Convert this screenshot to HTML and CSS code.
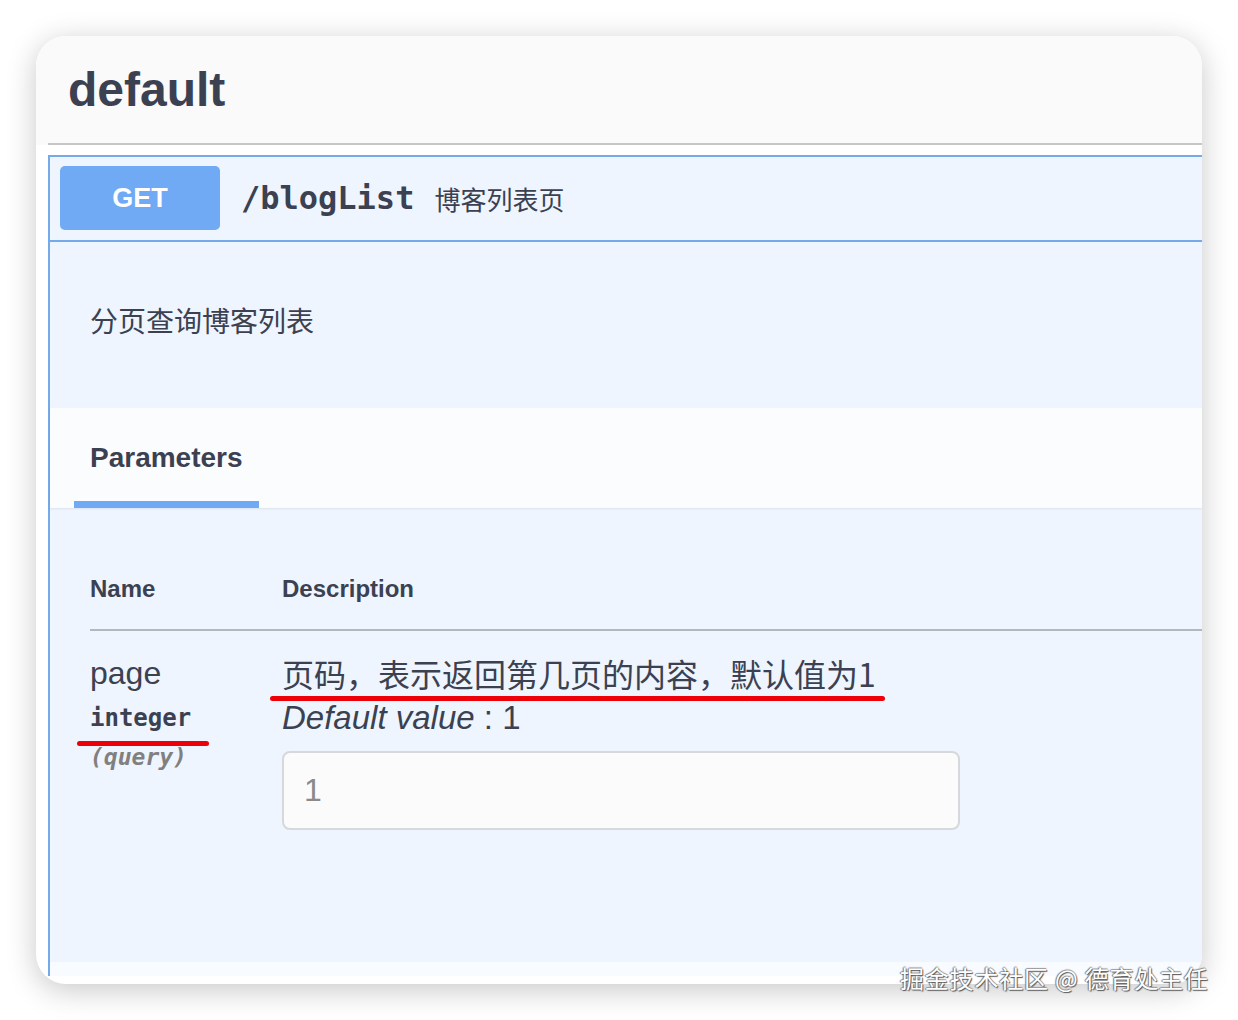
FILE: index.html
```html
<!DOCTYPE html>
<html lang="zh-CN">
<head>
<meta charset="utf-8">
<title>default - blogList</title>
<link rel="stylesheet" href="styles.css">
</head>
<body>
<div class="frame">
  <div class="tag-head">
    <h2 class="tag-title">default</h2>
  </div>
  <div class="opblock">
    <div class="summary">
      <span class="method">GET</span>
      <span class="path">/blogList</span>
      <span class="summary-desc">博客列表页</span>
    </div>
    <div class="op-desc">分页查询博客列表</div>
    <div class="params-head">
      <div class="tab">Parameters</div>
    </div>
    <div class="params-body">
      <div class="table-head">
        <div class="col-name">Name</div>
        <div class="col-desc">Description</div>
      </div>
      <div class="param-row">
        <div class="col-name">
          <div class="param-name">page</div>
          <div class="param-type"><span class="marked marked-type">integer</span></div>
          <div class="param-in">(query)</div>
        </div>
        <div class="col-desc">
          <div class="param-desc"><span class="marked marked-desc">页码，表示返回第几页的内容，默认值为1</span></div>
          <div class="param-default"><i>Default value</i> : 1</div>
          <div class="param-input">1</div>
        </div>
      </div>
    </div>
    <div class="op-foot"></div>
  </div>
</div>
<div class="watermark">掘金技术社区 @ 德育处主任</div>
</body>
</html>
```
FILE: styles.css
```css
html, body {
  margin: 0;
  padding: 0;
  background: #ffffff;
}
body {
  width: 1238px;
  height: 1020px;
  position: relative;
  overflow: hidden;
  font-family: "Liberation Sans", "Noto Sans CJK SC", sans-serif;
  color: #3b4151;
}
.frame {
  margin: 36px 0 0 36px;
  width: 1166px;
  height: 948px;
  border-radius: 30px;
  overflow: hidden;
  background: #ffffff;
  box-shadow: 0 6px 30px rgba(0, 0, 0, 0.22);
}
.tag-head {
  background: #fafafa;
  padding-left: 12px;
}
.tag-title {
  margin: 0;
  height: 107px;
  padding-left: 20px;
  display: flex;
  align-items: center;
  border-bottom: 2px solid #c6c6c6;
  font-size: 48px;
  font-weight: 700;
  color: #3b4151;
}
.opblock {
  margin: 10px -10px 0 12px;
  border: 2px solid #74aaea;
  border-bottom: none;
  background: #eef5fe;
}
.summary {
  display: flex;
  align-items: center;
  padding: 9px 10px 10px;
  border-bottom: 2px solid #74aaea;
}
.method {
  width: 160px;
  height: 64px;
  border-radius: 5px;
  background: #70a9f4;
  color: #ffffff;
  font-size: 27px;
  font-weight: 700;
  display: flex;
  align-items: center;
  justify-content: center;
}
.path {
  margin-left: 21px;
  font-family: "DejaVu Sans Mono", "Liberation Mono", monospace;
  font-weight: 700;
  font-size: 32px;
  color: #3b4151;
}
.summary-desc {
  margin-left: 20px;
  font-size: 26px;
  font-family: "Noto Sans CJK SC", sans-serif;
  color: #3b4151;
}
.op-desc {
  height: 166px;
  box-sizing: border-box;
  padding: 58px 40px 0;
  font-size: 28px;
  line-height: 40px;
  font-family: "Noto Sans CJK SC", sans-serif;
  color: #3b4151;
}
.params-head {
  height: 100px;
  box-sizing: border-box;
  padding-left: 24px;
  background: #fbfcfe;
  box-shadow: 0 1px 2px rgba(0, 0, 0, 0.08);
  position: relative;
  display: flex;
}
.tab {
  height: 100px;
  box-sizing: border-box;
  padding: 6px 16px 0;
  border-bottom: 7px solid #70a9f4;
  display: flex;
  align-items: center;
  font-size: 28px;
  font-weight: 700;
  color: #3b4151;
}
.params-body {
  height: 454px;
  box-sizing: border-box;
  padding-left: 40px;
}
.table-head {
  display: flex;
  padding: 66px 0 25px;
  border-bottom: 2px solid #b3b7be;
  font-size: 24px;
  line-height: 30px;
  font-weight: 700;
}
.col-name {
  width: 192px;
  flex: none;
}
.col-desc {
  flex: 1;
}
.param-row {
  display: flex;
  padding-top: 22px;
}
.param-name {
  font-size: 32px;
  line-height: 40px;
}
.param-type {
  margin-top: 10px;
  font-family: "DejaVu Sans Mono", "Liberation Mono", monospace;
  font-weight: 700;
  font-size: 24px;
  line-height: 30px;
}
.param-in {
  margin-top: 9px;
  font-family: "DejaVu Sans Mono", "Liberation Mono", monospace;
  font-weight: 700;
  font-style: italic;
  font-size: 23px;
  line-height: 30px;
  color: #808080;
}
.param-desc {
  font-size: 32px;
  line-height: 40px;
  font-family: "Noto Sans CJK SC", sans-serif;
}
.param-default {
  margin-top: 5px;
  font-size: 33px;
  line-height: 40px;
}
.param-input {
  margin-top: 13px;
  width: 678px;
  height: 79px;
  box-sizing: border-box;
  border: 2px solid #d6d8db;
  border-radius: 8px;
  background: #fbfbfc;
  padding-left: 20px;
  display: flex;
  align-items: center;
  font-size: 32px;
  color: #8a8a8a;
}
.marked {
  position: relative;
  display: inline-block;
}
.marked::after {
  content: "";
  position: absolute;
  height: 5px;
  border-radius: 3px;
  background: #ee0008;
}
.marked-type::after {
  left: -13px;
  right: -18px;
  bottom: -13px;
}
.marked-desc::after {
  left: -12px;
  right: -9px;
  bottom: -8px;
}
.op-foot {
  height: 14px;
  background: #f8fbff;
}
.watermark {
  position: absolute;
  left: 900px;
  top: 962px;
  font-family: "Noto Sans CJK SC", sans-serif;
  font-size: 24px;
  line-height: 32px;
  letter-spacing: 0.8px;
  color: #ffffff;
  text-shadow: 1px 1px 1px #555, -1px 0 1px #777, 0 -1px 1px #999;
  white-space: nowrap;
}
```
